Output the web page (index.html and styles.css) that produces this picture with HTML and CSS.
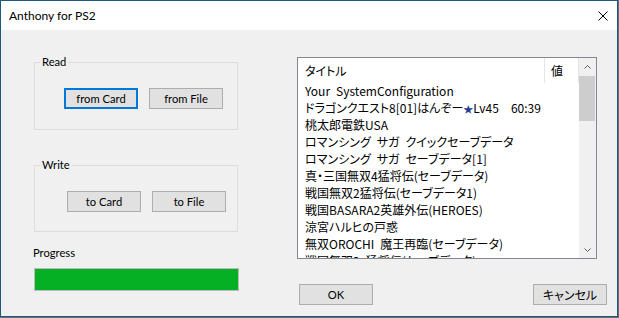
FILE: index.html
```html
<!DOCTYPE html>
<html lang="ja">
<head>
<meta charset="utf-8">
<title>Anthony for PS2</title>
<link rel="stylesheet" href="styles.css">
</head>
<body>
<div class="window">
  <div class="titlebar">
    <span class="title">Anthony for PS2</span>
    <svg class="close" width="10" height="10" viewBox="0 0 10 10"><path d="M0.5 0.5L9.5 9.5M9.5 0.5L0.5 9.5" stroke="#000" stroke-width="1" fill="none"/></svg>
  </div>
  <div class="client">
    <div class="left">
      <fieldset class="group read">
        <legend>Read</legend>
        <div class="btnrow read-row">
          <button class="btn focus">from Card</button>
          <button class="btn">from File</button>
        </div>
      </fieldset>
      <fieldset class="group write">
        <legend>Write</legend>
        <div class="btnrow write-row">
          <button class="btn">to Card</button>
          <button class="btn">to File</button>
        </div>
      </fieldset>
      <div class="progress-label">Progress</div>
      <div class="progress"><div class="fill"></div></div>
    </div>
    <div class="right">
      <div class="listview">
        <div class="lv-main">
          <div class="lv-header">
            <div class="h1">タイトル</div>
            <div class="h2">値</div>
          </div>
          <div class="lv-rows">
            <div class="row">Your&ensp;SystemConfiguration</div>
            <div class="row">ドラゴンクエスト8[01]はんぞー<span class="star">★</span>Lv45　60:39</div>
            <div class="row">桃太郎電鉄USA</div>
            <div class="row">ロマンシング&ensp;サガ&ensp;クイックセーブデータ</div>
            <div class="row">ロマンシング&ensp;サガ&ensp;セーブデータ[1]</div>
            <div class="row">真・三国無双4猛将伝(セーブデータ)</div>
            <div class="row">戦国無双2猛将伝(セーブデータ1)</div>
            <div class="row">戦国BASARA2英雄外伝(HEROES)</div>
            <div class="row">涼宮ハルヒの戸惑</div>
            <div class="row">無双OROCHI&ensp;魔王再臨(セーブデータ)</div>
            <div class="row">戦国無双3&ensp;猛将伝(セーブデータ)</div>
          </div>
        </div>
        <div class="scrollbar">
          <div class="sb-btn"><svg width="7" height="4" viewBox="0 0 7 4"><polyline points="0.5,3.5 3.5,0.5 6.5,3.5" stroke="#606060" fill="none" stroke-width="1"/></svg></div>
          <div class="sb-thumb"></div>
          <div class="sb-track"></div>
          <div class="sb-btn"><svg width="7" height="4" viewBox="0 0 7 4"><polyline points="0.5,0.5 3.5,3.5 6.5,0.5" stroke="#606060" fill="none" stroke-width="1"/></svg></div>
        </div>
      </div>
      <div class="bottom">
        <button class="btn">OK</button>
        <button class="btn jp">キャンセル</button>
      </div>
    </div>
  </div>
</div>
</body>
</html>
```
FILE: styles.css
```css
html, body {
  margin: 0;
  padding: 0;
}
body {
  width: 619px;
  height: 318px;
  overflow: hidden;
  background: #6d6d6d;
  font-family: Lato, "Noto Sans", sans-serif;
  font-size: 11.2px;
  color: #000;
}
.window {
  width: 618px;
  height: 317px;
  box-sizing: border-box;
  border: 1px solid #1b5a7e;
  background: #f0f0f0;
  display: flex;
  flex-direction: column;
}
.titlebar {
  height: 29px;
  flex: none;
  background: #fff;
  display: flex;
  align-items: center;
  padding-left: 8px;
}
.title {
  flex: 1;
  font-size: 12px;
  line-height: 16px;
}
.close {
  margin-right: 9px;
  display: block;
}
.client {
  flex: 1;
  display: flex;
  padding: 0 11px 0 33px;
}
.left {
  width: 205px;
  flex: none;
  display: flex;
  flex-direction: column;
}
.group {
  margin: 0;
  width: 204px;
  min-width: 0;
  box-sizing: border-box;
  border: 1px solid #dcdcdc;
  padding: 18px 0 20px;
}
.group.read {
  margin-top: 24px;
}
.group.write {
  margin-top: 27px;
  padding-bottom: 19px;
}
.group legend {
  margin-left: 5px;
  padding: 0 2px;
  line-height: 16px;
  font-size: 11.2px;
}
.btnrow {
  display: flex;
  gap: 11px;
}
.read-row {
  padding-left: 29px;
}
.write-row {
  padding-left: 32px;
}
.btn {
  width: 74px;
  height: 21px;
  box-sizing: border-box;
  margin: 0;
  padding: 0;
  border: 1px solid #adadad;
  background: #e1e1e1;
  font-family: Lato, "Noto Sans", sans-serif;
  font-size: 11.2px;
  color: #000;
  line-height: 19px;
}
.btn.focus {
  border: 2px solid #0078d7;
  line-height: 17px;
}
.btn.jp {
  font-family: "Noto Sans CJK JP", sans-serif;
  font-feature-settings: "palt";
  font-size: 12px;
}
.progress-label {
  margin-top: 13px;
  margin-left: -1px;
  line-height: 16px;
}
.progress {
  margin-top: 7px;
  width: 205px;
  height: 23px;
  box-sizing: border-box;
  border: 1px solid #bcbcbc;
  background: #e6e6e6;
}
.progress .fill {
  width: 100%;
  height: 100%;
  background: #06b025;
}
.right {
  margin-left: 58px;
  width: 310px;
  flex: none;
  display: flex;
  flex-direction: column;
}
.listview {
  margin-top: 27px;
  width: 300px;
  height: 202px;
  box-sizing: border-box;
  border: 1px solid #828790;
  background: #fff;
  display: flex;
  overflow: hidden;
}
.lv-main {
  width: 281px;
  flex: none;
  overflow: hidden;
  font-family: "Noto Sans CJK JP", sans-serif;
  font-feature-settings: "palt";
  font-size: 12px;
}
.lv-header {
  display: flex;
  height: 25px;
}
.h1, .h2 {
  box-sizing: border-box;
  border-right: 1px solid #e5e5e5;
  line-height: 25px;
  height: 25px;
  white-space: nowrap;
}
.h1 {
  width: 247px;
  padding-left: 7px;
}
.h2 {
  width: 34px;
  padding-left: 6px;
}
.row {
  height: 17px;
  line-height: 16px;
  padding-left: 7px;
  white-space: nowrap;
}
.star {
  color: #23408e;
  font-size: 10px;
}
.scrollbar {
  width: 17px;
  flex: none;
  background: #f0f0f0;
  display: flex;
  flex-direction: column;
}
.sb-btn {
  height: 17px;
  flex: none;
  display: flex;
  align-items: center;
  justify-content: center;
}
.sb-thumb {
  height: 45px;
  margin: 1px 1px 0 0;
  background: #cdcdcd;
  flex: none;
}
.sb-track {
  flex: 1;
}
.bottom {
  margin-top: 25px;
  padding-left: 2px;
  display: flex;
  justify-content: space-between;
}
```
